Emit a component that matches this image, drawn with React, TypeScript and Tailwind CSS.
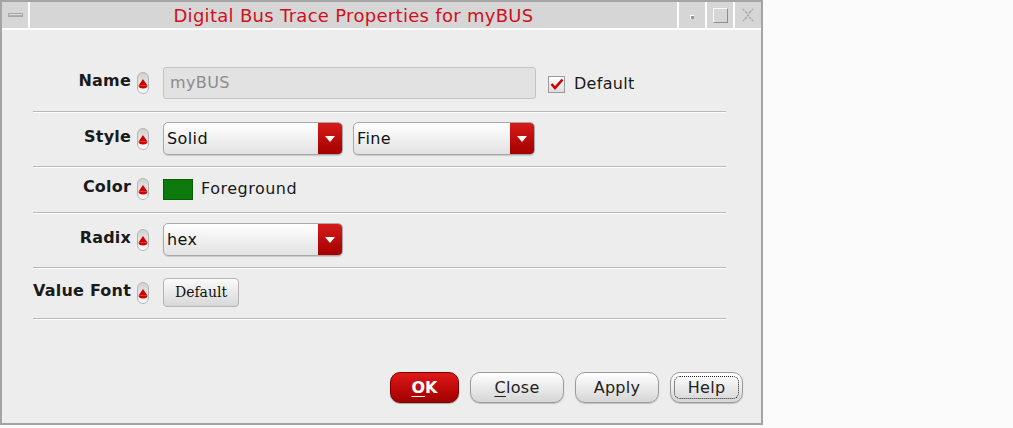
import React from "react";

function Indicator() {
  return (
    <svg width="12" height="22" viewBox="0 0 12 22" className="shrink-0">
      <defs>
        <linearGradient id="capg" x1="0" y1="0" x2="0" y2="1">
          <stop offset="0" stopColor="#cfcfcf" />
          <stop offset="0.5" stopColor="#e6e6e6" />
          <stop offset="1" stopColor="#ffffff" />
        </linearGradient>
      </defs>
      <rect x="0.5" y="0.5" width="11" height="21" rx="5.5" fill="url(#capg)" stroke="#b4b4b4" />
      <path d="M6 7 L10.5 13.5 L1.5 13.5 Z" fill="#d00000" />
      <path d="M1.5 13.5 L10.5 13.5 Q10.5 16.5 6 16.5 Q1.5 16.5 1.5 13.5 Z" fill="#d00000" />
    </svg>
  );
}

function Label({ text }: { text: string }) {
  return (
    <div className="w-[104px] text-right font-bold text-[16px] text-[#1a1a1a] pr-[6px] leading-none tracking-[0.2px] mb-[4px]">
      {text}
    </div>
  );
}

function Arrow() {
  return (
    <div className="w-[24px] self-stretch flex items-center justify-center bg-gradient-to-b from-[#d61a1a] to-[#a30000] rounded-r-[4px]">
      <svg width="10" height="6" viewBox="0 0 10 6">
        <path d="M0 0 L10 0 L5 6 Z" fill="#ffffff" />
      </svg>
    </div>
  );
}

function Combo({ value, width }: { value: string; width: string }) {
  return (
    <div
      className={`${width} h-[33px] flex items-stretch border border-[#a8a8a8] rounded-[5px] bg-gradient-to-b from-[#ffffff] to-[#e2e2e2] shadow-[0_1px_1px_rgba(0,0,0,0.15)]`}
    >
      <div className="flex-1 flex items-center pl-[3px] text-[16px] tracking-[0.4px] text-[#111]">{value}</div>
      <Arrow />
    </div>
  );
}

function Row({ children, pt, pb }: { children: React.ReactNode; pt: string; pb: string }) {
  return (
    <div className={`flex items-center ${pt} ${pb} border-b border-[#b8b8b8] shadow-[0_1px_0_#ffffff]`}>
      {children}
    </div>
  );
}

function Btn({ children, width, focus }: { children: React.ReactNode; width: string; focus?: boolean }) {
  return (
    <div
      className={`${width} h-[31px] rounded-[10px] border border-[#9c9c9c] bg-gradient-to-b from-[#ffffff] to-[#d6d6d6] flex items-center justify-center text-[16px] tracking-[0.3px] text-[#222] shadow-[0_1px_1px_rgba(0,0,0,0.2)]`}
    >
      {focus ? (
        <div className="border border-dotted border-[#222] w-[calc(100%-6px)] h-[calc(100%-6px)] rounded-[6px] flex items-center justify-center">
          {children}
        </div>
      ) : (
        children
      )}
    </div>
  );
}

export default function App() {
  return (
    <div className="w-[1013px] h-[428px] bg-[#fbfbfb] relative" style={{ fontFamily: "'DejaVu Sans', sans-serif" }}>
      <div className="w-[763px] h-[425px] border-[2px] border-[#a4a4a4] bg-[#ededed] flex flex-col">
        {/* title bar */}
        <div className="h-[28px] flex bg-[#d6d6d6] border-b-[2px] border-[#ffffff] shrink-0">
          <div className="w-[28px] flex items-center justify-center border-r-[2px] border-[#ffffff]">
            <div className="w-[15px] h-[4px] bg-gradient-to-b from-[#f4f4f4] to-[#9a9a9a] border border-[#a6a6a6]" />
          </div>
          <div className="flex-1 flex items-center justify-center text-[18px] text-[#d0101c] tracking-[0.3px]">
            Digital Bus Trace Properties for myBUS
          </div>
          <div className="w-[28px] flex items-center justify-center border-l-[2px] border-[#ffffff]">
            <div className="w-[4px] h-[4px] bg-[#9a9a9a] border-t border-l border-[#ffffff] mt-[4px]" />
          </div>
          <div className="w-[28px] flex items-center justify-center border-l-[2px] border-[#ffffff]">
            <div className="w-[15px] h-[15px] border border-t-[#fafafa] border-l-[#fafafa] border-r-[#8e8e8e] border-b-[#8e8e8e]" />
          </div>
          <div className="w-[28px] flex items-center justify-center border-l-[2px] border-[#ffffff]">
            <svg width="16" height="16" viewBox="0 0 16 16">
              <path d="M3 2 L6 5 M10 5 L13 2 M6 11 L3 14 M13 14 L10 11 M6 5 L10 11 M10 5 L6 11" stroke="#ababab" strokeWidth="1.5" strokeDasharray="2 1" fill="none" />
            </svg>
          </div>
        </div>

        {/* body */}
        <div className="flex-1 flex flex-col">
          <div className="ml-[31px] w-[693px] mt-[37px] flex flex-col">
            <Row pt="pt-0" pb="pb-[12px]">
              <Label text="Name" />
              <Indicator />
              <div className="ml-[14px] w-[373px] h-[32px] border border-[#c4c4c4] rounded-[3px] bg-[#e2e2e2] flex items-center pl-[6px] text-[16px] tracking-[0.4px] text-[#8c8c8c]">
                myBUS
              </div>
              <div className="ml-[12px] w-[17px] h-[17px] mt-[2px] border border-[#9a9a9a] bg-gradient-to-b from-[#ffffff] to-[#dcdcdc] flex items-center justify-center">
                <svg width="14" height="12" viewBox="0 0 14 12">
                  <path d="M1.5 6 L5 10 L12.5 1.5" stroke="#d00000" strokeWidth="2.6" fill="none" />
                </svg>
              </div>
              <div className="ml-[9px] text-[16px] tracking-[0.3px] text-[#1a1a1a] mt-[2px]">Default</div>
            </Row>
            <Row pt="pt-[10px]" pb="pb-[11px]">
              <Label text="Style" />
              <Indicator />
              <div className="ml-[14px] flex gap-[10px]">
                <Combo value="Solid" width="w-[180px]" />
                <Combo value="Fine" width="w-[182px]" />
              </div>
            </Row>
            <Row pt="pt-[10px]" pb="pb-[11px]">
              <Label text="Color" />
              <Indicator />
              <div className="ml-[14px] w-[30px] h-[21px] bg-[#0d7a0d] border border-[#0a5a0a]" />
              <div className="ml-[8px] text-[16px] tracking-[0.5px] text-[#1a1a1a]">Foreground</div>
            </Row>
            <Row pt="pt-[10px]" pb="pb-[11px]">
              <Label text="Radix" />
              <Indicator />
              <div className="ml-[14px]">
                <Combo value="hex" width="w-[180px]" />
              </div>
            </Row>
            <Row pt="pt-[10px]" pb="pb-[11px]">
              <Label text="Value Font" />
              <Indicator />
              <div
                className="ml-[14px] w-[76px] h-[29px] rounded-[4px] border border-[#b4b4b4] bg-gradient-to-b from-[#fbfbfb] to-[#d8d8d8] flex items-center justify-center text-[14px] text-[#111]"
                style={{ fontFamily: "'DejaVu Serif', serif" }}
              >
                Default
              </div>
            </Row>
          </div>

          <div className="mt-auto mb-[20px] mr-[18px] flex justify-end gap-[11px]">
            <div className="w-[69px] h-[31px] rounded-[10px] border border-[#7a0000] bg-gradient-to-b from-[#e01818] to-[#a00000] flex items-center justify-center text-[16px] font-bold text-white shadow-[0_1px_1px_rgba(0,0,0,0.3)]">
              <span><span className="underline underline-offset-[3px]">O</span>K</span>
            </div>
            <Btn width="w-[94px]">
              <span><span className="underline underline-offset-[3px]">C</span>lose</span>
            </Btn>
            <Btn width="w-[84px]">Apply</Btn>
            <Btn width="w-[73px]" focus>Help</Btn>
          </div>
        </div>
      </div>
    </div>
  );
}
